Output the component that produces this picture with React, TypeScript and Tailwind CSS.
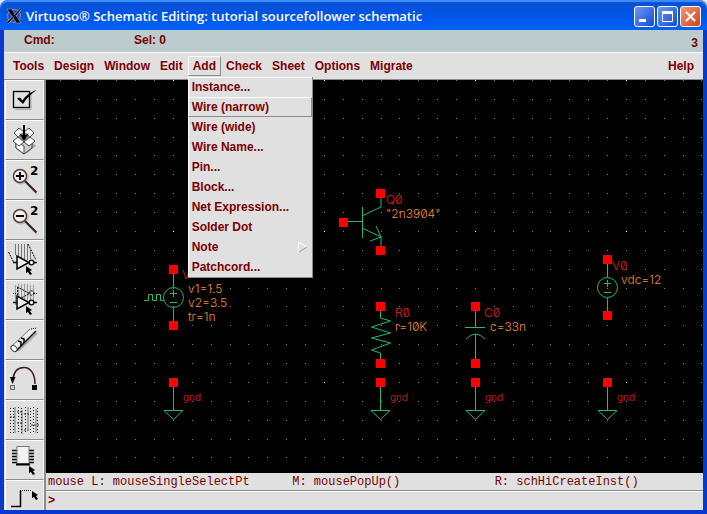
import React from "react";

const menus = ["Tools", "Design", "Window", "Edit", "Add", "Check", "Sheet", "Options", "Migrate"];

const addItems = [
  "Instance...",
  "Wire (narrow)",
  "Wire (wide)",
  "Wire Name...",
  "Pin...",
  "Block...",
  "Net Expression...",
  "Solder Dot",
  "Note",
  "Patchcord...",
];

const Cursor: React.FC<{ x: number; y: number }> = ({ x, y }) => (
  <path transform={`translate(${x} ${y})`} d="M0 0L6 4L4 5L6 8L4 9L2 6L0 7z" fill="#000" />
);

const Magnifier: React.FC<{ plus?: boolean }> = ({ plus }) => (
  <>
    <circle cx="15" cy="16" r="7" stroke="#aaa" />
    <circle cx="14" cy="15" r="6.5" fill="#eee" stroke="#5a3c3c" strokeWidth="1.5" />
    <path d={plus ? "M10 15h8M14 11v8" : "M10 15h8"} stroke="#000" strokeWidth="2" />
    <path d="M20 22.5l11 11" stroke="#aaa" />
    <path d="M19 20l11.5 11.5" stroke="#3c1c1c" strokeWidth="2" />
    <text x="24" y="14" className="fill-black font-['DejaVu_Sans',sans-serif] text-[12px] font-bold">2</text>
  </>
);

const Gate: React.FC = () => (
  <>
    <path d="M11 15v13l12-6.5z" fill="#eee" stroke="#000" strokeWidth="1.5" />
    <circle cx="25.5" cy="21.5" r="2.3" fill="#eee" stroke="#000" strokeWidth="1.3" />
    <path d="M7 21.5h4M28 21.5h3" stroke="#000" strokeWidth="1.5" />
    <Cursor x={20} y={25} />
  </>
);

const tools: { label: string; icon: React.ReactNode }[] = [
  {
    label: "Check and Save",
    icon: (
      <>
        <path d="M9 28.5h16v-15" stroke="#aaa" />
        <rect x="7.5" y="10.5" width="16" height="16" stroke="#000" strokeWidth="1.3" />
        <path d="M11 17.5l3-1 2.5 3C20 14 25 11 30.5 9 25 13 20 18 17 23z" fill="#000" />
      </>
    ),
  },
  {
    label: "Save",
    icon: (
      <>
        <path d="M20 33l10-8-3-3-8 6z" fill="#aaa" />
        <path d="M10 19l8-4 8 4v8l-8 6-8-6z" fill="#ccc" stroke="#444" />
        <path d="M10 20l8 5v8l-8-6z" fill="#fff" stroke="#444" />
        <path d="M8 12l5-5 5 4-6 5zM28 12l-5-5-5 4 6 5z" fill="#fff" stroke="#444" />
        <path d="M12 16l6 4 6-4-6-5z" fill="#888" />
        <path d="M12 16l-5 4 6 5 5-4zM24 16l5 4-6 5-5-4z" fill="#fff" stroke="#444" />
        <path d="M18 4v12" stroke="#000" strokeWidth="2" />
        <path d="M13 12l5 3 5-3-5 8z" fill="#000" />
      </>
    ),
  },
  { label: "Zoom In by 2", icon: <Magnifier plus /> },
  { label: "Zoom Out by 2", icon: <Magnifier /> },
  {
    label: "Stretch",
    icon: (
      <>
        <path d="M9.5 3v11M12.5 3v12M15.5 3v14M18.5 3v15M21.5 3v16M24.5 9v9" stroke="#777" />
        <path d="M2.5 11l5 10" stroke="#000" strokeDasharray="2 1" />
        <path d="M22 3l8 16" stroke="#000" strokeDasharray="2 1" />
        <Gate />
      </>
    ),
  },
  {
    label: "Copy",
    icon: (
      <>
        <path d="M9.5 4v20M12.5 3v12M15.5 3v14M18.5 3v15M21.5 3v16M24.5 4v15M27.5 4v20" stroke="#999" />
        <path d="M11.5 6v13l12-6.5z" stroke="#000" strokeDasharray="2 1" />
        <circle cx="25.5" cy="12" r="2.3" stroke="#000" strokeDasharray="2 1" />
        <path d="M7 12.5h4M28 12.5h3" stroke="#000" strokeDasharray="1 1" />
        <Gate />
      </>
    ),
  },
  {
    label: "Delete",
    icon: (
      <>
        <path d="M12 30L31 12" stroke="#aaa" strokeWidth="2" />
        <path d="M6 25L24 8l7-1-2 5-18 17-5 1z" fill="#eee" />
        <path d="M6 25L24 8" stroke="#777" />
        <path d="M10 30L30 10" stroke="#000" strokeWidth="1.5" />
        <path d="M25 8l6-1" stroke="#000" strokeDasharray="1 1" />
        <ellipse cx="8" cy="27.5" rx="2.5" ry="3.5" transform="rotate(-45 8 27.5)" fill="#fff" stroke="#333" />
        <path d="M12 20l3 1v4M15 17l3 1v4" stroke="#000" strokeWidth="1.5" />
      </>
    ),
  },
  {
    label: "Undo",
    icon: (
      <>
        <path d="M7 18C8 10 12 6.5 18 6.5S29 12 29 23" stroke="#3c1c1c" strokeWidth="1.5" />
        <path d="M4 16h5.5L6.5 23z" fill="#000" />
        <rect x="4.5" y="24.5" width="4" height="4" fill="#ccc" stroke="#000" strokeDasharray="1 1" />
        <rect x="26" y="24" width="5" height="5" fill="#000" />
      </>
    ),
  },
  {
    label: "Property",
    icon: (
      <>
        <path d="M9 6v26M16 9v24M22 6v22M30 8v24" stroke="#aaa" strokeWidth="2" />
        <path d="M4.5 7v26M7.5 7v26M12.5 6v27M15.5 7v26M19.5 6v27M24.5 7v26M27.5 6v27M31.5 7v26" stroke="#000" strokeDasharray="1 2" />
        <path d="M4 16h5M11 22h5M18 13h5M25 24h8M11 11h4M18 29h5" stroke="#333" strokeDasharray="2 1" />
      </>
    ),
  },
  {
    label: "Component",
    icon: (
      <>
        <path d="M6 9.5h22M6 12.5h22M6 15.5h22M6 18.5h22M6 21.5h22" stroke="#000" strokeWidth="1.3" />
        <rect x="11" y="5.5" width="12" height="17" fill="#f4f4f4" stroke="#777" />
        <path d="M10 23.5h14" stroke="#000" strokeWidth="2" />
        <Cursor x={23} y={25} />
      </>
    ),
  },
  {
    label: "Wire",
    icon: (
      <>
        <path d="M5 25.5h9.5v-16" stroke="#000" strokeWidth="1.5" />
        <path d="M14 9.5h12" stroke="#000" strokeDasharray="1 1" />
        <Cursor x={26} y={10} />
      </>
    ),
  },
];

// dots inside one 151px tile, eight to a side
const dots = [0, 19, 38, 57, 75, 94, 113, 132];

const Pin: React.FC<{ x: number; y: number }> = ({ x, y }) => (
  <rect x={x - 4} y={y - 4} width="9" height="9" fill="#ff0000" stroke="none" />
);

const Ground: React.FC<{ x: number }> = ({ x }) => (
  <g>
    <path d={`M${x + 0.5} 302v28M${x - 9} 330.5h19l-9.5 9z`} />
    <Pin x={x} y={302} />
    <text x={x + 10} y="321" className="fill-[#e01c28] stroke-none text-[10px]">gnd</text>
  </g>
);

const Source: React.FC<{ x: number; y: number }> = ({ x, y }) => (
  <g>
    <path d={`M${x + 0.5} ${y}v18M${x + 0.5} ${y + 39}v18`} />
    <circle cx={x + 0.5} cy={y + 28.5} r="10" />
    <path d={`M${x - 3} ${y + 24.5}h7M${x + 0.5} ${y + 21}v7M${x - 3} ${y + 33.5}h7`} />
    <Pin x={x} y={y} />
    <Pin x={x} y={y + 56} />
  </g>
);

const Label: React.FC<{ x: number; y: number; name?: boolean; children: React.ReactNode }> = ({ x, y, name, children }) => (
  <text x={x} y={y} className={name ? "fill-[#e81c28] stroke-none" : "fill-[#f08c34] stroke-none"}>
    {children}
  </text>
);

const Schematic: React.FC = () => (
  <svg
    className="block h-full w-full font-['Inter',sans-serif] text-[12px] font-light slashed-zero"
    fill="none"
    stroke="#28b870"
    role="img"
    aria-label="sourcefollower schematic"
  >
    <defs>
      <pattern id="grid" x="127" y="0" width="151" height="151" patternUnits="userSpaceOnUse">
        {dots.map((y) =>
          dots.map((x) => (
            <rect key={`${x}-${y}`} x={x} y={y} width="1" height="1" fill={x + y === 0 ? "#ffffff" : "#858585"} stroke="none" />
          ))
        )}
      </pattern>
    </defs>
    <rect width="100%" height="100%" fill="url(#grid)" stroke="none" />

    {/* pulse source */}
    <Source x={127} y={189} />
    <path d="M98 220.5h4.5v-6h4v6h4v-6h4v6h3" />
    <Label x={136} y={199} name>V</Label>
    <Label x={142} y={213}>v1=1.5</Label>
    <Label x={142} y={227}>v2=3.5</Label>
    <Label x={142} y={241}>tr=1n</Label>

    {/* transistor */}
    <path d="M297 141.5h19M316.5 127v31M316 136l19-9v-14M316 148l19 9v13M330 146l5 11-11 4" />
    <Pin x={334} y={113} />
    <Pin x={297} y={142} />
    <Pin x={334} y={170} />
    <Label x={340} y={124} name>Q0</Label>
    <Label x={340} y={138}>"2n3904"</Label>

    {/* resistor */}
    <path d="M334.5 227v11l10 3-19 6 19 6-19 5 19 5-19 7 9 3v11" />
    <Pin x={334} y={226} />
    <Pin x={334} y={283} />
    <Label x={349} y={237} name>R0</Label>
    <Label x={349} y={251}>r=10K</Label>

    {/* capacitor */}
    <path d="M429.5 227v20M419 247.5h20M420 259q9.5-10 19 0M429.5 254v29" />
    <Pin x={429} y={226} />
    <Pin x={429} y={283} />
    <Label x={438} y={237} name>C0</Label>
    <Label x={444} y={251}>c=33n</Label>

    {/* dc source */}
    <Source x={561} y={179} />
    <Label x={566} y={190} name>V0</Label>
    <Label x={575} y={204}>vdc=12</Label>

    <Ground x={127} />
    <Ground x={334} />
    <Ground x={429} />
    <Ground x={561} />
  </svg>
);

const TitleBar: React.FC = () => (
  <header className="flex h-[30px] shrink-0 items-center rounded-t-lg bg-linear-to-b from-[#0a4fd0] via-[#0054e6] to-[#0062fa] px-1.5 pt-0.5 shadow-[inset_0_2px_1px_#3c8cf8]">
    <svg className="mr-1 size-4 shrink-0" viewBox="0 0 16 16">
      <circle cx="8" cy="8" r="6.5" fill="none" stroke="#c07878" />
      <path d="M1 1h4.5L15 15h-4.5z" fill="#000" stroke="#bbb" strokeWidth=".5" />
      <path d="M14.5 1L9 7.5M7 9l-5.5 6" stroke="#ccc" strokeWidth="2.5" />
      <path d="M14.5 1L9 7.5M7 9l-5.5 6" stroke="#000" strokeWidth="1.5" />
    </svg>
    <h1 className="min-w-0 flex-1 truncate font-['Open_Sans',sans-serif] text-[13px] font-semibold text-white">
      Virtuoso® Schematic Editing: tutorial sourcefollower schematic
    </h1>
    <div className="flex gap-0.5">
      <button aria-label="Minimize" className="size-[21px] rounded-[3px] border border-white bg-linear-to-br from-[#6c98f4] to-[#1848d0]">
        <svg viewBox="0 0 19 19"><path d="M4 13.5h7" stroke="#fff" strokeWidth="3" /></svg>
      </button>
      <button aria-label="Maximize" className="size-[21px] rounded-[3px] border border-white bg-linear-to-br from-[#6c98f4] to-[#1848d0]">
        <svg viewBox="0 0 19 19" fill="none" stroke="#fff"><path d="M4.5 5v9.5h10V5" /><path d="M4 5.5h11" strokeWidth="3" /></svg>
      </button>
      <button aria-label="Close" className="size-[21px] rounded-[3px] border border-white bg-linear-to-br from-[#f09878] to-[#d03c10]">
        <svg viewBox="0 0 19 19"><path d="M5 5l9 9M14 5l-9 9" stroke="#fff" strokeWidth="2.2" /></svg>
      </button>
    </div>
  </header>
);

const MenuBar: React.FC = () => (
  <nav className="flex h-7 shrink-0 items-center border-t border-b border-t-white border-b-[#8c8c8c] bg-[#e0e0e0] px-1">
    {menus.map((menu) =>
      menu === "Add" ? (
        <div key={menu} className="relative">
          <button aria-haspopup="menu" aria-expanded="true" className="block h-5 border border-t-white border-r-[#8c8c8c] border-b-[#8c8c8c] border-l-white px-1 leading-4">
            {menu}
          </button>
          <div role="menu" className="absolute top-[21px] left-0 z-10 w-[125px] border-r border-b border-[#8c8c8c] bg-[#e0e0e0] shadow-[inset_1px_1px_#fff]">
            {addItems.map((item) => (
              <button
                key={item}
                role="menuitem"
                className={
                  item === "Wire (narrow)"
                    ? "flex h-5 w-full items-center justify-between border border-t-white border-r-[#8c8c8c] border-b-[#8c8c8c] border-l-white px-[3px] whitespace-nowrap"
                    : "flex h-5 w-full items-center justify-between border border-transparent px-[3px] whitespace-nowrap"
                }
              >
                {item}
                {item === "Note" && (
                  <svg className="h-3 w-2.5" viewBox="0 0 10 12" fill="none">
                    <path d="M.5 11V1L9 6" stroke="#fff" />
                    <path d="M1 11l8-5" stroke="#999" />
                  </svg>
                )}
              </button>
            ))}
          </div>
        </div>
      ) : (
        <button key={menu} className="h-5 border border-transparent px-1">
          {menu}
        </button>
      )
    )}
    <button className="ml-auto h-5 border border-transparent px-1">Help</button>
  </nav>
);

export default function App() {
  return (
    <div className="flex h-screen flex-col bg-[#d8e4f8] font-['Liberation_Sans',Arial,sans-serif] text-[12px] leading-4 font-bold text-[#780000]">
      <TitleBar />
      <div className="flex min-h-0 flex-1 flex-col border-x-4 border-b-4 border-[#0838d0] bg-[#e0e0e0]">
        <div className="flex h-[22px] shrink-0 items-center bg-[#bccccc] pr-[5px] pl-5">
          <span className="w-[110px] pb-0.5">Cmd:</span>
          <span className="pb-0.5">Sel: 0</span>
          <span className="ml-auto pt-1">3</span>
        </div>
        <MenuBar />
        <div className="flex min-h-0 flex-1">
          <aside className="flex w-[42px] shrink-0 flex-col overflow-hidden border-r-2 border-[#8c8c8c] pl-px">
            {tools.map((tool) => (
              <button
                key={tool.label}
                aria-label={tool.label}
                className="h-10 w-full shrink-0 border border-t-white border-r-[#f4f4f4] border-b-[#8c8c8c] border-l-white"
              >
                <svg className="block h-[38px] w-[38px]" viewBox="0 0 38 38" fill="none">{tool.icon}</svg>
              </button>
            ))}
          </aside>
          <main className="flex min-w-0 flex-1 flex-col">
            <div className="min-h-0 flex-1 overflow-hidden bg-black">
              <Schematic />
            </div>
            <div className="grid h-[18px] shrink-0 grid-cols-[245fr_203fr_209fr] items-center border-b border-[#8c8c8c] pl-0.5 font-['Liberation_Mono',monospace] font-normal whitespace-nowrap">
              <span>mouse L: mouseSingleSelectPt</span>
              <span>M: mousePopUp()</span>
              <span>R: schHiCreateInst()</span>
            </div>
            <div className="flex h-[19px] shrink-0 items-center border-t border-white pl-0.5 font-['Liberation_Mono',monospace]">
              <label htmlFor="command">&gt;</label>
              <input id="command" className="ml-1 min-w-0 flex-1 bg-transparent outline-none" />
            </div>
          </main>
        </div>
      </div>
    </div>
  );
}
